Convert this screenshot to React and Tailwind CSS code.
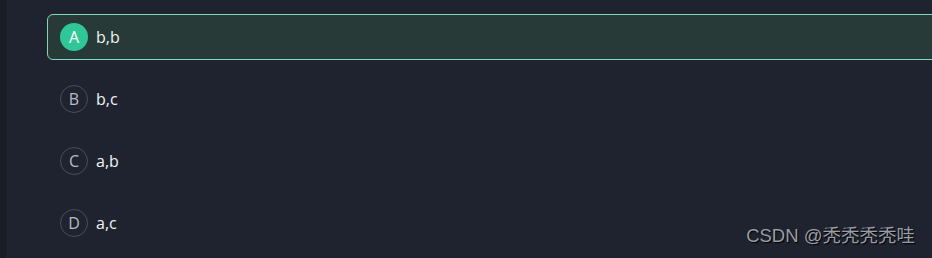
import React from "react";

const options = [
  { key: "A", text: "b,b", selected: true },
  { key: "B", text: "b,c" },
  { key: "C", text: "a,b" },
  { key: "D", text: "a,c" },
];

export default function App() {
  return (
    <div
      className="relative flex h-[258px] w-[932px] overflow-hidden bg-[#1f2330]"
      style={{ fontFamily: '"Open Sans", "Noto Sans", "Noto Sans CJK SC", sans-serif' }}
    >
      <div className="w-[7px] shrink-0 bg-[#1a1d26]" />
      <div className="flex flex-1 flex-col gap-4 pl-10 pt-[14px]">
        {options.map((o) => (
          <div
            key={o.key}
            className={
              o.selected
                ? "-mr-4 flex h-[46px] items-center gap-2 rounded-md border border-[#7fd9b3] bg-[#283a37] pl-3"
                : "flex h-[46px] items-center gap-2 border border-transparent pl-3"
            }
          >
            <span
              className={
                o.selected
                  ? "flex h-7 w-7 items-center justify-center rounded-full bg-[#2fc795] text-[16px] text-white"
                  : "flex h-7 w-7 items-center justify-center rounded-full border border-[#4a4e5b] text-[16px] text-[#b8bcc6]"
              }
            >
              {o.key}
            </span>
            <span className="text-[16px] text-[#f2f3f5]">{o.text}</span>
          </div>
        ))}
      </div>
      <div
        className="absolute bottom-[8px] right-[17px] text-[18.5px] text-[#9a9da4]"
        style={{ fontFamily: '"Liberation Sans", "Noto Sans CJK SC", sans-serif', textShadow: "1px 1px 1px #000" }}
      >
        CSDN @秃秃秃秃哇
      </div>
    </div>
  );
}
